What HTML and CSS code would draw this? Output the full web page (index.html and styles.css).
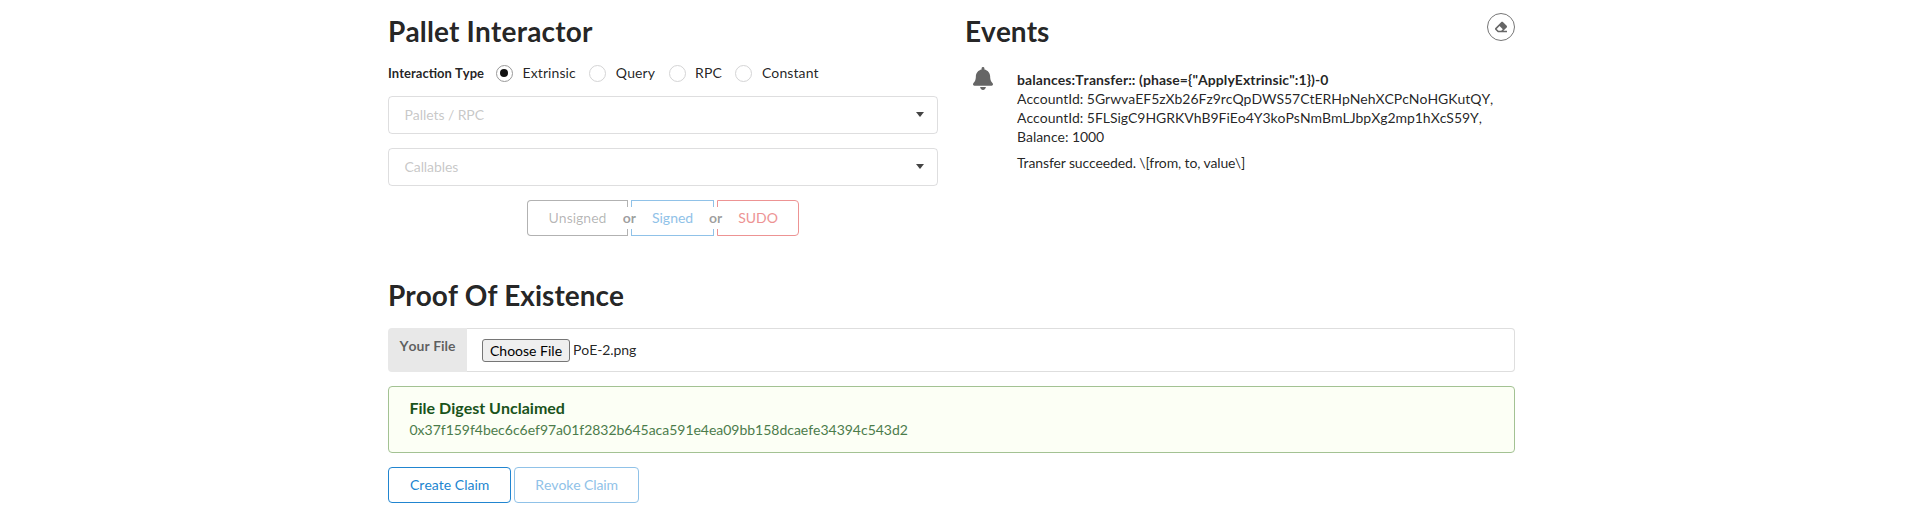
FILE: index.html
```html
<!DOCTYPE html>
<html lang="en">

<head>
    <meta charset="UTF-8">
    <meta name="viewport" content="width=device-width, initial-scale=1.0">
    <title>Substrate Front End</title>

    <link rel="stylesheet" href="styles.css">
</head>

<body>
    <div class="container">
        <div class="columns">
            <div class="interactor">
                <h1 class="heading">Pallet Interactor</h1>
                <div class="interaction-row">
                    <span class="field-label">Interaction Type</span>
                    <span class="radio checked">Extrinsic</span>
                    <span class="radio">Query</span>
                    <span class="radio">RPC</span>
                    <span class="radio">Constant</span>
                </div>
                <div class="dropdown">Pallets / RPC</div>
                <div class="dropdown">Callables</div>
                <div class="tx-buttons">
                    <button class="tx-btn tx-unsigned">Unsigned</button>
                    <span class="or">or</span>
                    <button class="tx-btn tx-signed">Signed</button>
                    <span class="or">or</span>
                    <button class="tx-btn tx-sudo">SUDO</button>
                </div>
            </div>
            <div class="events">
                <div class="events-head">
                    <h1 class="heading">Events</h1>
                    <button class="clear-btn" aria-label="Clear events">
                        <svg class="eraser" viewBox="0 0 512 512">
                            <path d="M497.941 273.941c18.745-18.745 18.745-49.137 0-67.882l-160-160c-18.745-18.745-49.137-18.745-67.882 0l-256 256c-18.745 18.745-18.745 49.137 0 67.882l96 96A48.004 48.004 0 0 0 144 480h356c6.627 0 12-5.373 12-12v-40c0-6.627-5.373-12-12-12H355.883l142.058-142.059zm-302.627-62.627l137.373 137.373L265.373 416H150.628l-80-80 124.686-124.686z" />
                        </svg>
                    </button>
                </div>
                <div class="event">
                    <svg class="bell" viewBox="0 0 448 512">
                        <path d="M224 512c35.32 0 63.97-28.65 63.97-64H160.03c0 35.35 28.65 64 63.97 64zm215.39-149.71c-19.32-20.76-55.47-51.99-55.47-154.29 0-77.7-54.48-139.9-127.94-155.16V32c0-17.67-14.32-32-31.98-32s-31.98 14.33-31.98 32v20.84C118.56 68.1 64.08 130.3 64.08 208c0 102.3-36.15 133.53-55.47 154.29-6 6.45-8.66 14.16-8.61 21.71.11 16.4 12.98 32 32.1 32h383.8c19.12 0 32-15.6 32.1-32 .05-7.55-2.61-15.27-8.61-21.71z" />
                    </svg>
                    <div class="event-body">
                        <div class="event-title">balances:Transfer:: (phase={"ApplyExtrinsic":1})-0</div>
                        <div class="event-line">AccountId: 5GrwvaEF5zXb26Fz9rcQpDWS57CtERHpNehXCPcNoHGKutQY,</div>
                        <div class="event-line">AccountId: 5FLSigC9HGRKVhB9FiEo4Y3koPsNmBmLJbpXg2mp1hXcS59Y,</div>
                        <div class="event-line">Balance: 1000</div>
                        <div class="event-desc">Transfer succeeded. \[from, to, value\]</div>
                    </div>
                </div>
            </div>
        </div>

        <h1 class="heading poe-heading">Proof Of Existence</h1>
        <div class="file-input">
            <div class="file-label">Your File</div>
            <div class="file-field">
                <button class="file-btn">Choose File</button>
                <span class="file-name">PoE-2.png</span>
            </div>
        </div>
        <div class="message">
            <div class="message-title">File Digest Unclaimed</div>
            <div class="message-text">0x37f159f4bec6c6ef97a01f2832b645aca591e4ea09bb158dcaefe34394c543d2</div>
        </div>
        <div class="claim-buttons">
            <button class="claim-btn">Create Claim</button>
            <button class="claim-btn disabled">Revoke Claim</button>
        </div>
    </div>
</body>

</html>
```

FILE: styles.css
```css
* {
    box-sizing: border-box;
}
body {
    margin: 0;
    padding-right: 2px;
    background: #fff;
    color: rgba(0, 0, 0, 0.87);
    font-family: Lato, "Helvetica Neue", Arial, sans-serif;
    font-size: 14px;
    font-kerning: none;
    line-height: 1.4285;
}
button {
    font-family: inherit;
    font-size: 14px;
    font-kerning: none;
}
.container {
    width: 1127px;
    margin: 0 auto;
    padding-top: 13px;
}
.columns {
    display: flex;
    gap: 27px;
}
.interactor {
    width: 550px;
}
.interactor .heading {
    letter-spacing: 0.14px;
}
.events {
    flex: 1;
}
.heading {
    margin: 0;
    font-size: 28px;
    font-weight: 700;
    line-height: 36px;
}
.interaction-row {
    display: flex;
    align-items: center;
    height: 20px;
    margin-top: 14px;
}
.field-label {
    font-size: 13px;
    font-weight: 700;
    margin-right: 12px;
}
.radio {
    position: relative;
    padding-left: 26.5px;
    margin-right: 13.5px;
    letter-spacing: 0.1px;
}
.radio::before {
    content: "";
    position: absolute;
    left: 0;
    top: 2px;
    width: 15px;
    height: 15px;
    border: 1px solid #d4d4d5;
    border-radius: 50%;
}
.radio.checked::before {
    border-color: #999;
}
.radio.checked::after {
    content: "";
    position: absolute;
    left: 3.5px;
    top: 5.5px;
    width: 8px;
    height: 8px;
    background: #111;
    border-radius: 50%;
}
.dropdown {
    position: relative;
    height: 38px;
    margin-top: 13px;
    padding: 8px 15.5px;
    border: 1px solid rgba(34, 36, 38, 0.15);
    border-radius: 4px;
    color: rgba(191, 191, 191, 0.87);
    letter-spacing: -0.08px;
}
.dropdown + .dropdown {
    margin-top: 14px;
}
.dropdown::after {
    content: "";
    position: absolute;
    right: 13px;
    top: 15px;
    border-style: solid;
    border-width: 5px 4.5px 0;
    border-color: #444 transparent transparent;
}
.tx-buttons {
    display: flex;
    justify-content: center;
    align-items: center;
    margin-top: 14px;
}
.tx-btn {
    height: 36px;
    padding: 0 20px 1px;
    background: #fff;
    border: 1px solid;
    border-radius: 0;
}
.tx-unsigned {
    padding: 0 20.5px 1px;
    color: rgba(0, 0, 0, 0.3);
    border-color: rgba(0, 0, 0, 0.3);
    border-radius: 4px 0 0 4px;
}
.tx-signed {
    color: #90c2e8;
    border-color: #90c2e8;
}
.tx-sudo {
    color: #ed9393;
    border-color: #ed9393;
    border-radius: 0 4px 4px 0;
}
.or {
    position: relative;
    z-index: 1;
    width: 18px;
    margin: 0 -7.5px;
    background: #fff;
    color: rgba(0, 0, 0, 0.4);
    font-weight: 700;
    line-height: 22px;
    text-align: center;
}
.events-head {
    display: flex;
    justify-content: space-between;
    align-items: flex-start;
}
.clear-btn {
    width: 28px;
    height: 28px;
    padding: 0;
    display: flex;
    align-items: center;
    justify-content: center;
    background: #fff;
    border: 1px solid #767676;
    border-radius: 50%;
}
.eraser {
    width: 12px;
    height: 12px;
    fill: #666;
}
.event {
    display: flex;
    margin-top: 21px;
}
.bell {
    width: 20px;
    height: 23px;
    margin: -3px 0 0 8px;
    fill: #666;
    flex: none;
}
.event-body {
    margin-left: 24px;
    line-height: 19px;
}
.event-title {
    font-weight: 700;
    letter-spacing: 0.07px;
}
.event-line {
    letter-spacing: -0.04px;
}
.event-desc {
    margin-top: 7px;
    font-kerning: normal;
    letter-spacing: -0.12px;
}
.poe-heading {
    margin-top: 41px;
}
.file-input {
    display: flex;
    height: 44px;
    margin-top: 15px;
}
.file-label {
    width: 79px;
    padding: 8px 0 8px 11.5px;
    background: #e8e8e8;
    border-radius: 4px 0 0 4px;
    color: rgba(0, 0, 0, 0.6);
    font-weight: 700;
    white-space: nowrap;
}
.file-field {
    flex: 1;
    display: flex;
    align-items: center;
    gap: 3px;
    padding-left: 15px;
    border: 1px solid rgba(34, 36, 38, 0.15);
    border-left: none;
    border-radius: 0 4px 4px 0;
}
.file-btn {
    height: 23px;
    padding: 0 7px;
    background: #efefef;
    border: 1px solid #767676;
    border-radius: 3px;
    color: #000;
}
.file-name {
    letter-spacing: -0.1px;
}
.message {
    height: 67px;
    margin-top: 14px;
    padding: 10px 20.5px;
    background: #fcfff5;
    border: 1px solid #a3c293;
    border-radius: 4px;
    color: #2c662d;
}
.message-title {
    color: #1a531b;
    font-size: 16px;
    font-weight: 700;
    line-height: 21px;
}
.message-text {
    margin-top: 2px;
    opacity: 0.85;
    letter-spacing: -0.02px;
}
.claim-buttons {
    display: flex;
    gap: 3px;
    margin-top: 14px;
}
.claim-btn {
    height: 36px;
    padding: 0 21px 1px;
    background: #fff;
    border: 1px solid #2185d0;
    border-radius: 4px;
    color: #2185d0;
}
.claim-btn.disabled {
    padding: 0 20px 1px;
    color: #90c2e8;
    border-color: #90c2e8;
    letter-spacing: -0.1px;
}
```
